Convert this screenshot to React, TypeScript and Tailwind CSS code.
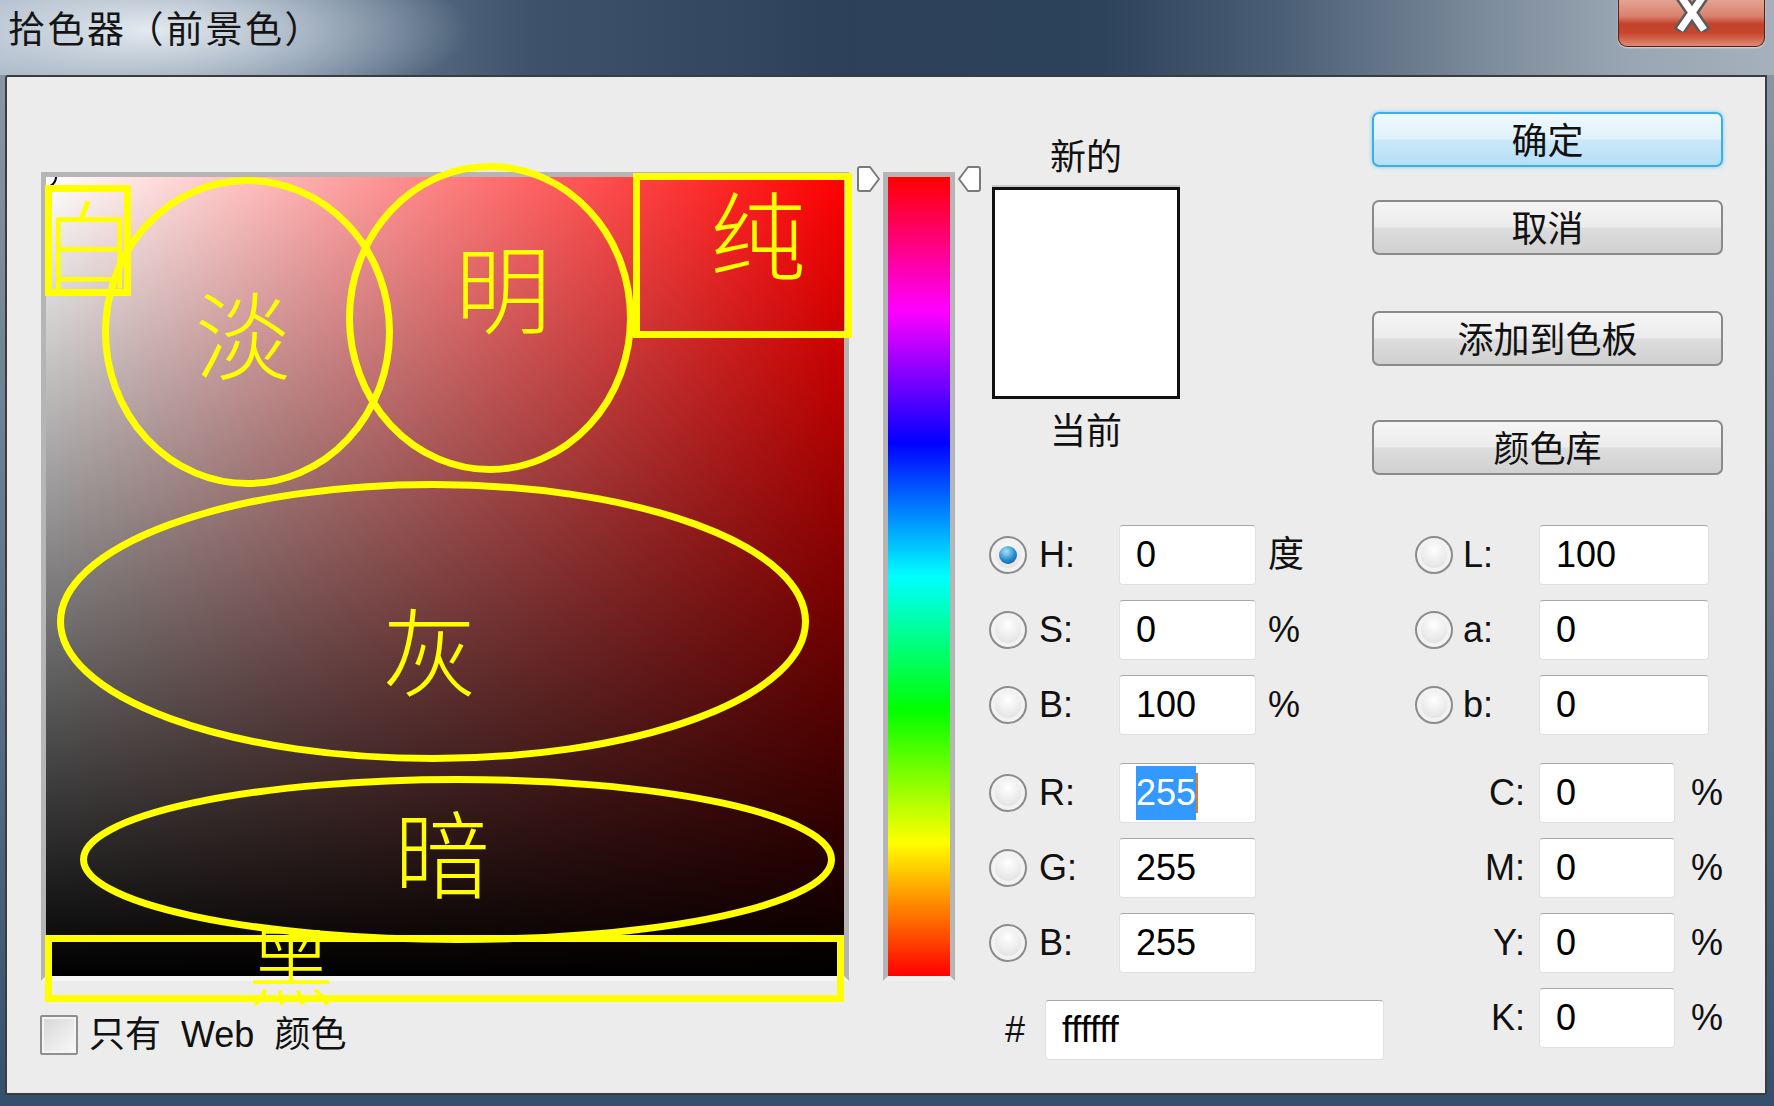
import type { ReactNode } from "react";

const FONT = "font-['Liberation_Sans','Noto_Sans_CJK_SC',sans-serif]";

function Radio({ on = false }: { on?: boolean }) {
  return (
    <span className="flex h-[38px] w-[38px] shrink-0 items-center justify-center rounded-full border-2 border-[#8c8c8c] bg-[radial-gradient(circle_at_50%_35%,#ffffff,#d4d4d4)] shadow-[inset_0_0_0_4px_#f2f2f2]">
      {on && (
        <span className="h-[18px] w-[18px] rounded-full bg-[radial-gradient(circle_at_40%_30%,#a8e4ff,#2288cc_55%,#0b4d80)]" />
      )}
    </span>
  );
}

function Input({ className, children }: { className: string; children: ReactNode }) {
  return (
    <div
      className={`flex h-[60px] shrink-0 items-center rounded-[4px] border border-[#dde1e6] border-t-[#a6a8ad] bg-white pl-[16px] text-[36px] text-black ${className}`}
    >
      {children}
    </div>
  );
}

function HsbRow({ k, v, unit, on, sel }: { k: string; v: string; unit?: string; on?: boolean; sel?: boolean }) {
  return (
    <div className="flex h-[60px] items-center">
      <Radio on={on} />
      <span className="ml-[12px] w-[80px] text-[36px] text-[#111]">{k}:</span>
      <Input className="w-[137px]">
        {sel ? (
          <>
            <span className="bg-[#3399ff] text-white">{v}</span>
            <span className="h-[40px] w-[2px] bg-[#e07a2a]" />
          </>
        ) : (
          v
        )}
      </Input>
      {unit && <span className="ml-[12px] text-[36px] text-[#111]">{unit}</span>}
    </div>
  );
}

function LabRow({ k, v }: { k: string; v: string }) {
  return (
    <div className="flex h-[60px] items-center">
      <Radio />
      <span className="ml-[10px] w-[76px] text-[36px] text-[#111]">{k}:</span>
      <Input className="w-[170px]">{v}</Input>
    </div>
  );
}

function CmykRow({ k, v }: { k: string; v: string }) {
  return (
    <div className="flex h-[60px] items-center">
      <span className="w-[110px] text-right text-[36px] text-[#111]">{k}:</span>
      <Input className="ml-[14px] w-[136px]">{v}</Input>
      <span className="ml-[16px] text-[36px] text-[#111]">%</span>
    </div>
  );
}

function Btn({ label, primary = false }: { label: string; primary?: boolean }) {
  return (
    <div
      className={
        primary
          ? "flex h-[55px] items-center justify-center rounded-[7px] border-2 border-[#3caee8] bg-[linear-gradient(to_bottom,#eef8fe_0%,#e1f2fc_48%,#cae8f9_52%,#b5dff6_100%)] pt-[4px] text-[36px] leading-none text-[#111] shadow-[0_0_4px_#7ccdf2]"
          : "flex h-[55px] items-center justify-center rounded-[7px] border-2 border-[#8a8a8a] bg-[linear-gradient(to_bottom,#f5f5f5_0%,#ececec_48%,#dddddd_52%,#d0d0d0_100%)] pt-[4px] text-[36px] leading-none text-[#111]"
      }
    >
      {label}
    </div>
  );
}

function Marker({ flip = false }: { flip?: boolean }) {
  return (
    <svg width="24" height="28" viewBox="0 0 24 28" className={flip ? "-scale-x-100" : ""}>
      <path
        d="M3 2 H13 L22 14 L13 26 H3 Q1 26 1 24 V4 Q1 2 3 2 Z"
        fill="#ffffff"
        stroke="#7a7a7a"
        strokeWidth="2"
        strokeLinejoin="round"
      />
    </svg>
  );
}

// yellow hand-drawn notes over the colour field
function Annotations() {
  const y = "#ffff00";
  const mark = "absolute -translate-x-1/2 -translate-y-1/2 font-['Noto_Sans_CJK_SC',sans-serif] font-light leading-none text-[#ffff00]";
  return (
    <div className="pointer-events-none absolute left-0 top-0 h-[809px] w-[808px]">
      <svg className="absolute left-0 top-0 overflow-visible" width="820" height="860">
        <g fill="none" stroke={y} strokeWidth="7">
          <rect x="7.5" y="16.5" width="79" height="104" />
          <ellipse cx="206.5" cy="160" rx="142" ry="151.5" />
          <ellipse cx="449" cy="146" rx="140.5" ry="151.5" />
          <rect x="595.5" y="4.5" width="212" height="158" />
          <ellipse cx="392" cy="449.5" rx="372.5" ry="137" />
          <ellipse cx="416.5" cy="687.5" rx="374" ry="80" />
          <rect x="7.5" y="766.5" width="792" height="60" />
        </g>
      </svg>
      <span className={`${mark} left-[48px] top-[68px] text-[96px]`}>白</span>
      <span className={`${mark} left-[202px] top-[159px] text-[96px]`}>淡</span>
      <span className={`${mark} left-[462px] top-[113px] text-[96px]`}>明</span>
      <span className={`${mark} left-[717px] top-[59px] text-[96px]`}>纯</span>
      <span className={`${mark} left-[389px] top-[476px] text-[96px]`}>灰</span>
      <span className={`${mark} left-[401px] top-[678px] text-[96px]`}>暗</span>
      <span className={`${mark} left-[250px] top-[790px] text-[86px]`}>黑</span>
    </div>
  );
}

export default function App() {
  return (
    <div className={`flex h-[1106px] w-[1774px] flex-col overflow-hidden bg-[linear-gradient(to_bottom,#8d9aa8,#5d7188_60%,#34506c)] ${FONT}`}>
      {/* title bar */}
      <div className="relative h-[75px] shrink-0 bg-[radial-gradient(ellipse_320px_85px_at_150px_30px,rgba(230,236,242,0.97),rgba(230,236,242,0)),linear-gradient(to_right,#97a8ba_0%,#6c8198_17%,#3e536b_30%,#2c4059_48%,#2d425b_62%,#4a5e75_72%,#7d8c9c_84%,#9aa6b3_92%,#a5b0bc_100%)]">
        <div className="pl-[8px] pt-[9px] text-[37px] leading-[44px] tracking-[2.5px] text-[#151515]">拾色器（前景色）</div>
        <div className="absolute right-[9px] top-0 flex h-[47px] w-[147px] justify-center rounded-b-[9px] border border-t-0 border-[#5a1e14] bg-[linear-gradient(to_bottom,#e3a393_0%,#d9826f_35%,#c4422a_52%,#c7462d_72%,#df8b76_100%)] shadow-[0_1px_2px_rgba(255,255,255,0.6)]">
          <svg width="36" height="32" viewBox="0 0 36 32">
            <g strokeLinecap="square">
              <path d="M8 -2 L28 27 M28 -2 L8 27" stroke="#5b5b5b" strokeWidth="12" />
              <path d="M8 -2 L28 27 M28 -2 L8 27" stroke="#ffffff" strokeWidth="7" />
            </g>
          </svg>
        </div>
      </div>

      {/* body */}
      <div className="flex h-[1020px] shrink-0">
        <div className="w-[5px] shrink-0" />
        <div className="flex h-[1020px] w-[1762px] shrink-0 items-start overflow-hidden rounded-tl-[3px] border-2 border-[#3c3c3c] bg-[#ececec]">
          {/* colour field + web checkbox */}
          <div className="flex flex-col pl-[34px] pt-[95px]">
            <div className="relative h-[809px] w-[808px]">
              <div className="h-full w-full border-[5px] border-[#b5b5b5] border-b-[#f6f6f6]">
                <div className="relative h-full w-full overflow-hidden bg-[linear-gradient(to_bottom,rgba(0,0,0,0),#000),linear-gradient(to_right,#fff,#f00)]">
                  <span className="absolute -left-[11px] -top-[11px] h-[22px] w-[22px] rounded-full border-2 border-black shadow-[inset_0_0_0_2px_#fff]" />
                </div>
              </div>
              <Annotations />
            </div>
            <div className="mt-[33px] -ml-[1px] flex h-[41px] items-center">
              <span className="h-[40px] w-[38px] rounded-[2px] border-2 border-[#8e8f8f] bg-[linear-gradient(135deg,#d6d6d6,#f9f9f9)] shadow-[inset_0_0_0_2px_#f4f4f4]" />
              <span className="ml-[11px] text-[36px] leading-none text-[#111] [word-spacing:10px]">只有 Web 颜色</span>
            </div>
          </div>

          {/* hue slider */}
          <div className="relative ml-[34px] mt-[95px] h-[809px] w-[72px] shrink-0 border-[5px] border-[#b5b5b5] border-b-[#f0f0f0]">
            <div className="h-full w-full bg-[linear-gradient(to_bottom,#f00_0%,#f0f_16.67%,#00f_33.33%,#0ff_50%,#0f0_66.67%,#ff0_83.33%,#f00_100%)]" />
            <div className="absolute -left-[31px] -top-[12px]">
              <Marker />
            </div>
            <div className="absolute -right-[31px] -top-[12px]">
              <Marker flip />
            </div>
          </div>

          {/* right area */}
          <div className="ml-[34px] flex flex-col">
            <div className="flex items-start">
              <div className="ml-[3px] flex w-[188px] flex-col items-center">
                <span className="mt-[61px] h-[40px] text-[36px] leading-[40px] text-[#111]">新的</span>
                <div className="mt-[9px] h-[212px] w-[188px] border-[3px] border-[#111] bg-white shadow-[0_-2px_0_#c9c9c9]" />
                <span className="mt-[13px] h-[40px] text-[36px] leading-[40px] text-[#111]">当前</span>
              </div>
              <div className="ml-[192px] mt-[35px] flex w-[351px] flex-col">
                <Btn label="确定" primary />
                <div className="mt-[33px]">
                  <Btn label="取消" />
                </div>
                <div className="mt-[56px]">
                  <Btn label="添加到色板" />
                </div>
                <div className="mt-[54px]">
                  <Btn label="颜色库" />
                </div>
              </div>
            </div>

            <div className="mt-[50px] flex items-start">
              <div className="flex w-[395px] flex-col">
                <HsbRow k="H" v="0" unit="度" on />
                <div className="mt-[15px]">
                  <HsbRow k="S" v="0" unit="%" />
                </div>
                <div className="mt-[15px]">
                  <HsbRow k="B" v="100" unit="%" />
                </div>
                <div className="mt-[28px]">
                  <HsbRow k="R" v="255" sel />
                </div>
                <div className="mt-[15px]">
                  <HsbRow k="G" v="255" />
                </div>
                <div className="mt-[15px]">
                  <HsbRow k="B" v="255" />
                </div>
                <div className="mt-[27px] flex h-[60px] items-center pl-[16px]">
                  <span className="w-[24px] text-[36px] text-[#111]">#</span>
                  <Input className="ml-[16px] w-[339px]">ffffff</Input>
                </div>
              </div>

              <div className="ml-[31px] flex flex-col">
                <LabRow k="L" v="100" />
                <div className="mt-[15px]">
                  <LabRow k="a" v="0" />
                </div>
                <div className="mt-[15px]">
                  <LabRow k="b" v="0" />
                </div>
                <div className="mt-[28px]">
                  <CmykRow k="C" v="0" />
                </div>
                <div className="mt-[15px]">
                  <CmykRow k="M" v="0" />
                </div>
                <div className="mt-[15px]">
                  <CmykRow k="Y" v="0" />
                </div>
                <div className="mt-[15px]">
                  <CmykRow k="K" v="0" />
                </div>
              </div>
            </div>
          </div>
        </div>
        <div className="w-[7px] shrink-0" />
      </div>
      <div className="h-[11px] shrink-0 bg-[#34506c]" />
    </div>
  );
}
